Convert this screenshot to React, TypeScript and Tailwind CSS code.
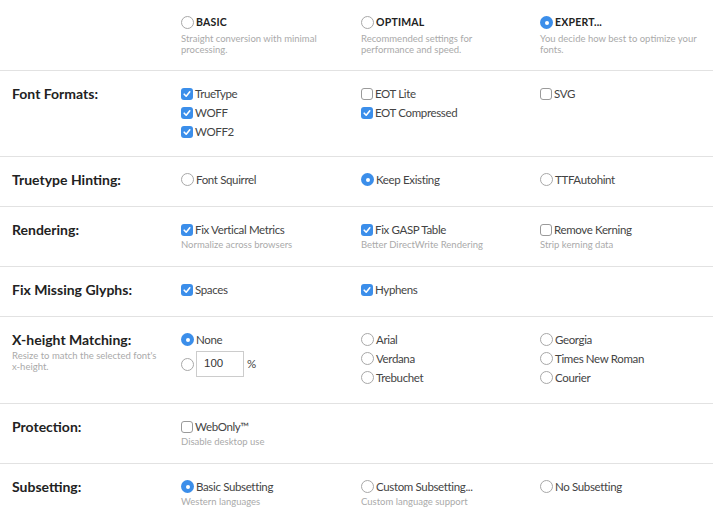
import React from 'react';

const Check = ({ on }: { on?: boolean }) =>
  on ? (
    <span className="w-3 h-3 rounded-[3px] bg-[#3b8eea] flex items-center justify-center shrink-0">
      <svg viewBox="0 0 12 12" className="w-3 h-3">
        <path d="M3.2 6.2 L5.2 8.2 L8.8 3.8" fill="none" stroke="white" strokeWidth="1.6" strokeLinecap="round" strokeLinejoin="round" />
      </svg>
    </span>
  ) : (
    <span className="w-3 h-3 rounded-[3px] border border-[#9a9a9a] bg-white shrink-0" />
  );

const Radio = ({ on }: { on?: boolean }) =>
  on ? (
    <span className="w-[13px] h-[13px] rounded-full bg-[#3b8eea] flex items-center justify-center shrink-0">
      <span className="w-[4px] h-[4px] rounded-full bg-white" />
    </span>
  ) : (
    <span className="w-[13px] h-[13px] rounded-full border border-[#a8a8a8] bg-white shrink-0" />
  );

type Opt = { label: string; kind: 'c' | 'r'; on?: boolean; desc?: string };

const Option = ({ o }: { o: Opt }) => (
  <div>
    <div className="flex items-center gap-[2px] h-[19px] text-[11.5px] tracking-[-0.35px] text-[#444]">
      {o.kind === 'c' ? <Check on={o.on} /> : <Radio on={o.on} />}
      <span>{o.label}</span>
    </div>
    {o.desc && <div className="text-[9.5px] leading-[12px] text-[#aaa]">{o.desc}</div>}
  </div>
);

const Label = ({ label, sub }: { label: string; sub?: string }) => (
  <div className="pl-3 pr-2 min-h-[21px]">
    <div className="h-[19px] flex items-center text-[14px] font-bold text-[#222]">{label}</div>
    {sub && <div className="text-[9.5px] leading-[11px] text-[#aaa] mt-[1px] pr-4">{sub}</div>}
  </div>
);

const Row = ({ label, cols }: { label: string; cols: Opt[][] }) => (
  <div className="grid grid-cols-[181px_180px_179px_1fr] border-t border-[#e2e2e2] pt-[13px] pb-[15px]">
    <Label label={label} />
    {cols.map((c, i) => (
      <div key={i}>
        {c.map((o) => (
          <Option key={o.label} o={o} />
        ))}
      </div>
    ))}
  </div>
);

const Head = ({ title, desc, on, wide }: { title: string; desc: string; on?: boolean; wide?: boolean }) => (
  <div>
    <div className="flex items-center gap-[2px] h-[19px]">
      <Radio on={on} />
      <span className="text-[10.5px] font-bold text-[#222] tracking-[0.2px]">{title}</span>
    </div>
    <div className={wide ? 'text-[9.5px] leading-[10.5px] text-[#aaa] mt-[2px] pr-[6px]' : 'text-[9.5px] leading-[10.5px] text-[#aaa] mt-[2px] pr-[18px]'}>
      {desc}
    </div>
  </div>
);

export default function App() {
  return (
    <div className="w-[713px] h-[519px] overflow-hidden bg-white" style={{ fontFamily: 'Lato, "Liberation Sans", sans-serif' }}>
      <div className="grid grid-cols-[181px_180px_179px_1fr] pt-[13px] h-[70px]">
        <div />
        <Head title="BASIC" desc="Straight conversion with minimal processing." />
        <Head title="OPTIMAL" desc="Recommended settings for performance and speed." />
        <Head title="EXPERT..." desc="You decide how best to optimize your fonts." on wide />
      </div>
      <Row
        label="Font Formats:"
        cols={[
          [
            { label: 'TrueType', kind: 'c', on: true },
            { label: 'WOFF', kind: 'c', on: true },
            { label: 'WOFF2', kind: 'c', on: true },
          ],
          [
            { label: 'EOT Lite', kind: 'c' },
            { label: 'EOT Compressed', kind: 'c', on: true },
          ],
          [{ label: 'SVG', kind: 'c' }],
        ]}
      />
      <Row
        label="Truetype Hinting:"
        cols={[
          [{ label: 'Font Squirrel', kind: 'r' }],
          [{ label: 'Keep Existing', kind: 'r', on: true }],
          [{ label: 'TTFAutohint', kind: 'r' }],
        ]}
      />
      <Row
        label="Rendering:"
        cols={[
          [{ label: 'Fix Vertical Metrics', kind: 'c', on: true, desc: 'Normalize across browsers' }],
          [{ label: 'Fix GASP Table', kind: 'c', on: true, desc: 'Better DirectWrite Rendering' }],
          [{ label: 'Remove Kerning', kind: 'c', desc: 'Strip kerning data' }],
        ]}
      />
      <Row
        label="Fix Missing Glyphs:"
        cols={[[{ label: 'Spaces', kind: 'c', on: true }], [{ label: 'Hyphens', kind: 'c', on: true }], []]}
      />
      <div className="grid grid-cols-[181px_180px_179px_1fr] border-t border-[#e2e2e2] pt-[13px] pb-[16px]">
        <Label label="X-height Matching:" sub="Resize to match the selected font's x-height." />
        <div>
          <Option o={{ label: 'None', kind: 'r', on: true }} />
          <div className="flex items-center gap-[2px] mt-[2px]">
            <Radio />
            <div className="w-[48px] h-[26px] border border-[#ccc] flex items-center pl-[7px] text-[11.5px] text-[#333]" style={{ fontFamily: '"Liberation Sans", sans-serif' }}>
              100
            </div>
            <span className="text-[11.5px] text-[#444] ml-[1px]">%</span>
          </div>
        </div>
        <div>
          <Option o={{ label: 'Arial', kind: 'r' }} />
          <Option o={{ label: 'Verdana', kind: 'r' }} />
          <Option o={{ label: 'Trebuchet', kind: 'r' }} />
        </div>
        <div>
          <Option o={{ label: 'Georgia', kind: 'r' }} />
          <Option o={{ label: 'Times New Roman', kind: 'r' }} />
          <Option o={{ label: 'Courier', kind: 'r' }} />
        </div>
      </div>
      <Row
        label="Protection:"
        cols={[[{ label: 'WebOnly™', kind: 'c', desc: 'Disable desktop use' }], [], []]}
      />
      <Row
        label="Subsetting:"
        cols={[
          [{ label: 'Basic Subsetting', kind: 'r', on: true, desc: 'Western languages' }],
          [{ label: 'Custom Subsetting...', kind: 'r', desc: 'Custom language support' }],
          [{ label: 'No Subsetting', kind: 'r' }],
        ]}
      />
    </div>
  );
}
